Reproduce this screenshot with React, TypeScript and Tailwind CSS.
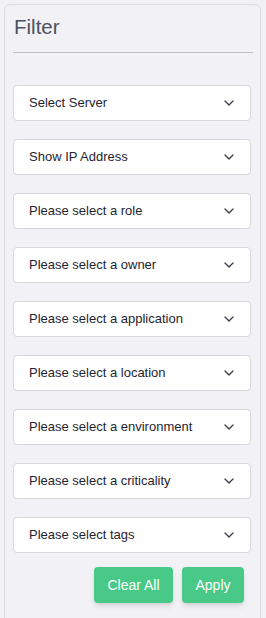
import { ChevronDown } from 'lucide-react';

const selects = [
  'Select Server',
  'Show IP Address',
  'Please select a role',
  'Please select a owner',
  'Please select a application',
  'Please select a location',
  'Please select a environment',
  'Please select a criticality',
  'Please select tags',
];

export default function App() {
  return (
    <div className="min-h-[618px] bg-[#f2f2f6] pt-[4px] pl-[4px] pr-[5px] font-['Liberation_Sans',Arial,sans-serif]">
      <div className="h-[640px] rounded-[6px] border border-[#dcdce0] bg-[#f1f1f6] px-[8px] pt-[8px]">
        <h2 className="text-[20.5px] leading-[28px] text-[#4b5160] pl-px">Filter</h2>
        <div className="mt-[11px] h-px bg-[#bdbdc2] mr-[-1px]" />

        <div className="mt-[32px] flex flex-col gap-[18px]">
          {selects.map((label) => (
            <button
              key={label}
              className="flex h-[36px] w-[238px] items-center justify-between rounded-[4px] border border-[#d5d5da] bg-white pl-[15px] pr-[13px] text-left"
            >
              <span className="text-[13px] text-[#1f2530]">{label}</span>
              <ChevronDown className="h-[16px] w-[16px] text-[#3a3f4a]" strokeWidth={2} />
            </button>
          ))}
        </div>

        <div className="mt-[14px] flex justify-end gap-[9px] pr-[8px]">
          <button className="h-[36px] w-[79px] rounded-[4px] bg-[#48c987] text-[14px] text-white shadow-md">Clear All</button>
          <button className="h-[36px] w-[62px] rounded-[4px] bg-[#48c987] text-[14px] text-white shadow-md">Apply</button>
        </div>
      </div>
    </div>
  );
}
